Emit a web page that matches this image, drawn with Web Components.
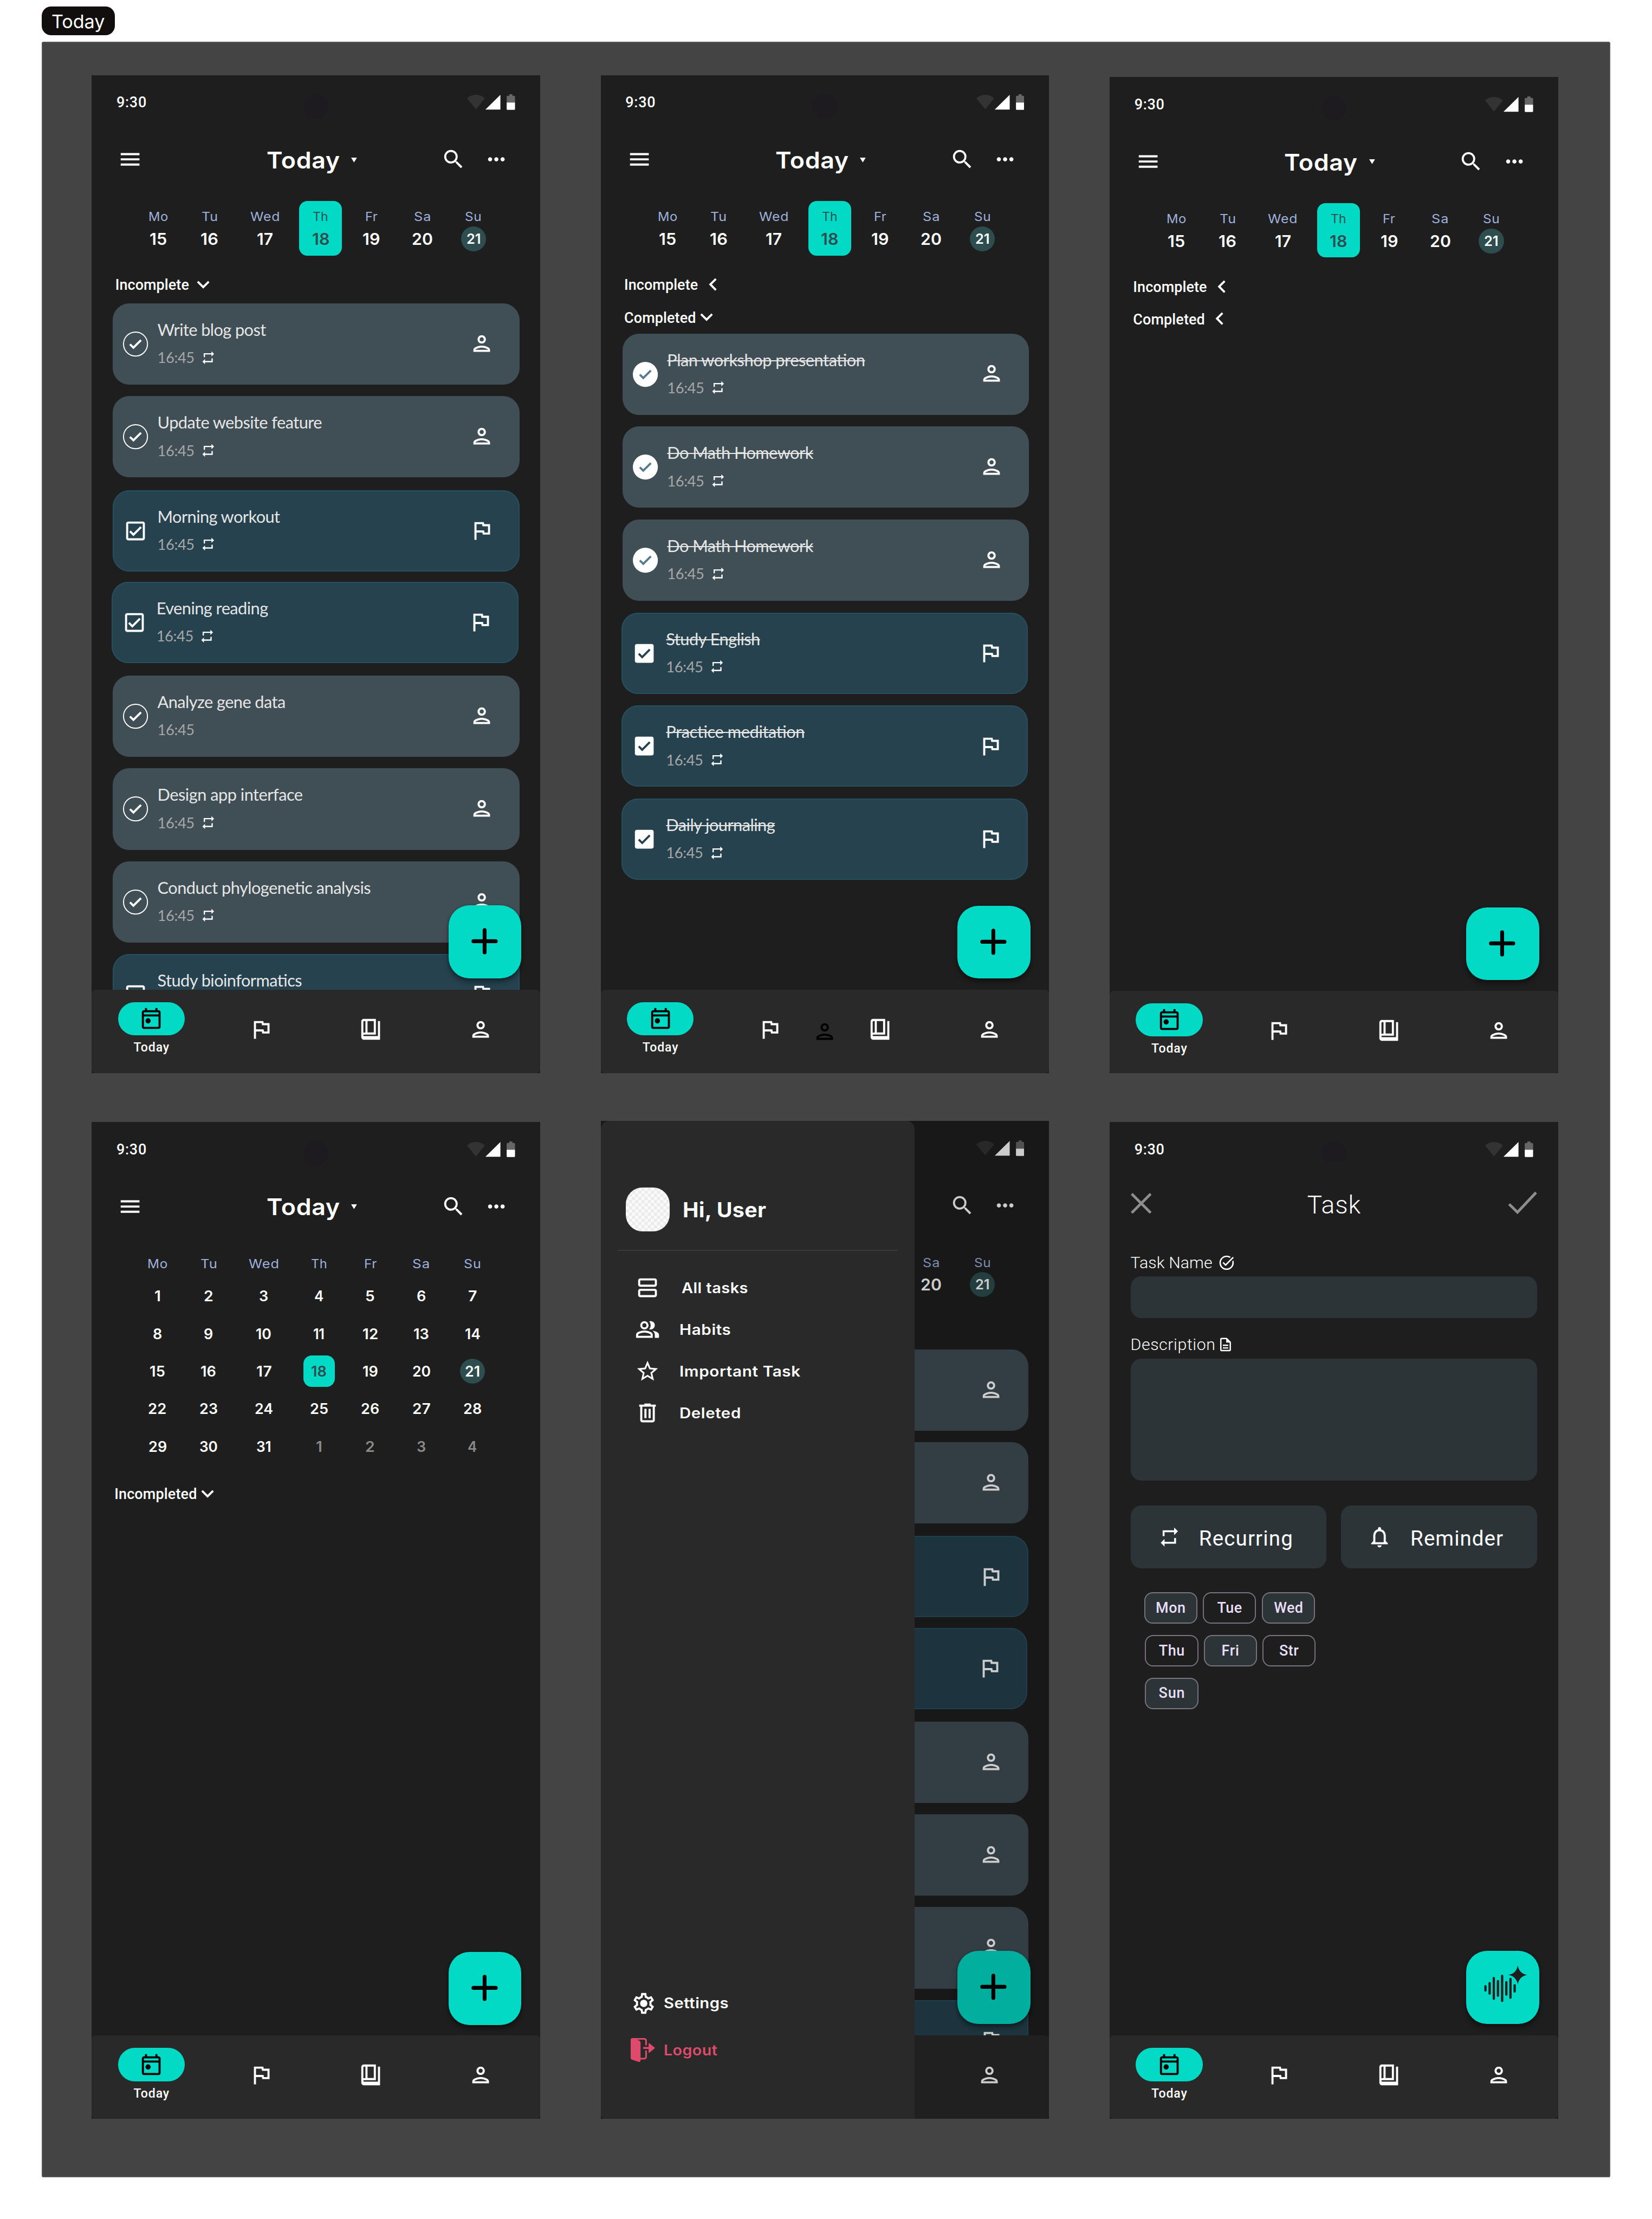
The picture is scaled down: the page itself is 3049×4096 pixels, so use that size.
<!DOCTYPE html>
<html lang="en">
<head>
<meta charset="utf-8">
<title>Today</title>
<style>
html,body{margin:0;padding:0;background:#fff}
body{overflow:hidden}
design-board{zoom:1.92487}
</style>
</head>
<body>
<design-board>
  <board-row>
    <phone-screen height="957">
      <status-bar></status-bar><app-header></app-header><week-strip></week-strip>
      <section-toggle label="Incomplete" w="69.2" gap="1.6" icon="down" style="margin-top:13.2px"></section-toggle>
      <task-list slot="list" set="open" style="margin-top:2.8px"></task-list>
      <fab-button slot="fab"></fab-button>
      <bottom-nav slot="nav"></bottom-nav>
    </phone-screen>
    <phone-screen height="957">
      <status-bar></status-bar><app-header></app-header><week-strip></week-strip>
      <section-toggle label="Incomplete" w="69.2" gap="2.5" icon="left" style="margin-top:13.2px"></section-toggle>
      <section-toggle label="Completed" w="67.4" gap="-1.9" icon="down" style="margin-top:1.4px"></section-toggle>
      <task-list slot="list" set="done" style="margin-top:.3px"></task-list>
      <fab-button slot="fab" style="--top:796.4px"></fab-button>
      <bottom-nav slot="nav" extra></bottom-nav>
    </phone-screen>
    <phone-screen height="955">
      <status-bar></status-bar><app-header></app-header><week-strip></week-strip>
      <section-toggle label="Incomplete" w="69.2" gap="2.5" icon="left" style="margin-top:13.2px"></section-toggle>
      <section-toggle label="Completed" w="67.4" gap="2" icon="left" style="margin-top:1px"></section-toggle>
      <fab-button slot="fab"></fab-button>
      <bottom-nav slot="nav" style="margin-bottom:-1px"></bottom-nav>
    </phone-screen>
  </board-row>
  <board-row>
    <phone-screen height="956">
      <status-bar></status-bar><app-header></app-header><month-grid></month-grid>
      <section-toggle label="Incompleted" w="77.2" gap="-1.9" icon="down" style="margin-top:12.9px;margin-left:-.8px"></section-toggle>
      <fab-button slot="fab"></fab-button>
      <bottom-nav slot="nav"></bottom-nav>
    </phone-screen>
    <phone-screen height="957">
      <status-bar covered></status-bar><app-header covered></app-header><week-strip covered></week-strip>
      <task-list slot="list" set="open" covered style="margin-top:46px"></task-list>
      <fab-button slot="fab"></fab-button>
      <bottom-nav slot="nav" covered></bottom-nav>
      <side-drawer slot="over"></side-drawer>
    </phone-screen>
    <phone-screen height="956">
      <status-bar clipped></status-bar>
      <task-form></task-form>
      <fab-button slot="fab" kind="voice" style="--top:795px"></fab-button>
      <bottom-nav slot="nav"></bottom-nav>
    </phone-screen>
  </board-row>
</design-board>

<script>
const ICONS = {
  menu:'<path d="M3 18h18v-2H3v2zm0-5h18v-2H3v2zm0-7v2h18V6H3z"/>',
  search:'<path d="M15.5 14h-.79l-.28-.27A6.471 6.471 0 0 0 16 9.5 6.5 6.5 0 1 0 9.5 16c1.61 0 3.09-.59 4.23-1.57l.27.28v.79l5 4.99L20.49 19l-4.99-5zm-6 0C7.01 14 5 11.99 5 9.5S7.01 5 9.5 5 14 7.01 14 9.5 11.99 14 9.5 14z"/>',
  more:'<path d="M6 10c-1.1 0-2 .9-2 2s.9 2 2 2 2-.9 2-2-.9-2-2-2zm12 0c-1.1 0-2 .9-2 2s.9 2 2 2 2-.9 2-2-.9-2-2-2zm-6 0c-1.1 0-2 .9-2 2s.9 2 2 2 2-.9 2-2-.9-2-2-2z"/>',
  down:'<path d="M16.59 8.59L12 13.17 7.41 8.59 6 10l6 6 6-6z"/>',
  left:'<path d="M15.41 7.41L14 6l-6 6 6 6 1.41-1.41L10.83 12z"/>',
  person:'<path d="M12 6c1.1 0 2 .9 2 2s-.9 2-2 2-2-.9-2-2 .9-2 2-2m0 10c2.7 0 5.8 1.29 6 2H6c.23-.72 3.31-2 6-2m0-12C9.79 4 8 5.79 8 8s1.79 4 4 4 4-1.79 4-4-1.79-4-4-4zm0 10c-2.67 0-8 1.34-8 4v2h16v-2c0-2.66-5.33-4-8-4z"/>',
  flag:'<path d="M12.36 6l.4 2H18v6h-3.36l-.4-2H7V6h5.36M14 4H5v17h2v-7h5.6l.4 2h7V6h-5.6L14 4z"/>',
  repeat:'<path d="M7 7h10v3l4-4-4-4v3H5v6h2V7zm10 10H7v-3l-4 4 4 4v-3h12v-6h-2v4z"/>',
  box:'<path d="M19 3H5c-1.1 0-2 .9-2 2v14c0 1.1.9 2 2 2h14c1.1 0 2-.9 2-2V5c0-1.1-.9-2-2-2zm0 16H5V5h14v14zM17.99 9l-1.41-1.42-6.59 6.59-2.58-2.57-1.42 1.41 4 3.99z"/>',
  boxFull:'<rect x="3" y="3" width="18" height="18" rx="2"/><path fill="#25424e" d="M17.99 9l-1.41-1.42-6.59 6.59-2.58-2.57-1.42 1.41 4 3.99z"/>',
  ring:'<circle cx="12" cy="12" r="11.5" fill="none" stroke="currentColor"/><path d="M17.99 8.9l-1.41-1.42-6.59 6.59-2.58-2.57-1.42 1.41 4 3.99z"/>',
  ringFull:'<circle cx="12" cy="12" r="12"/><path fill="#557c8e" d="M17.99 8.9l-1.41-1.42-6.59 6.59-2.58-2.57-1.42 1.41 4 3.99z"/>',
  today:'<path fill-rule="evenodd" d="M5 22c-1.1 0-2-.9-2-2V6c0-1.1.9-2 2-2h1V2h2v2h8V2h2v2h1c1.1 0 2 .9 2 2v14c0 1.1-.9 2-2 2H5zm0-2h14V10H5v10zM5 8h14V6H5v2z"/><circle cx="9" cy="14.2" r="2.5"/>',
  book:'<path fill-rule="evenodd" d="M5.5 2H17v15H5.8c-.5 0-.8.3-.8.75s.3.75.8.75H19V4h2v18H5.8C4.2 22 3 20.8 3 19.2V4.5C3 3.1 4.1 2 5.5 2zM5 4.6v10.6L7 15V4h-1.4zM9 4v11h6V4z"/>',
  views:'<path fill-rule="evenodd" d="M5 3h14c1.1 0 2 .9 2 2v4c0 1.1-.9 2-2 2H5c-1.1 0-2-.9-2-2V5c0-1.1.9-2 2-2zm0 2v4h14V5zm0 8h14c1.1 0 2 .9 2 2v4c0 1.1-.9 2-2 2H5c-1.1 0-2-.9-2-2v-4c0-1.1.9-2 2-2zm0 2v4h14v-4z"/>',
  group:'<path fill-rule="evenodd" d="M1 20v-2.8c0-.57.15-1.09.44-1.56.29-.48.68-.84 1.16-1.09 1.03-.52 2.08-.9 3.15-1.16C6.82 13.13 7.9 13 9 13s2.18.13 3.25.39c1.07.26 2.12.64 3.15 1.16.48.25.87.61 1.16 1.09.29.47.44.99.44 1.56V20H1zm2-2h12v-.8c0-.37-.18-.68-.5-.85-.9-.45-1.8-.79-2.73-1.01C10.85 15.11 9.93 15 9 15s-1.85.11-2.77.34C5.3 15.56 4.4 15.9 3.5 16.35c-.32.17-.5.48-.5.85V18z"/><path d="M19 20v-3c0-.73-.2-1.44-.61-2.11-.41-.68-.99-1.26-1.74-1.74.85.1 1.65.27 2.4.51.75.24 1.45.54 2.1.89.6.33 1.06.7 1.38 1.11.32.41.47.85.47 1.34v3h-4z"/><path fill-rule="evenodd" d="M9 12a4 4 0 1 1 0-8 4 4 0 0 1 0 8zm0-2a2 2 0 1 0 0-4 2 2 0 0 0 0 4z"/><path d="M19 8a4 4 0 0 1-4 4c-.18 0-.42-.02-.7-.06-.28-.04-.52-.09-.7-.14.45-.53.8-1.13 1.04-1.78A5.8 5.8 0 0 0 15 8c0-.7-.12-1.37-.36-2.03A5.9 5.9 0 0 0 13.6 4.2 4 4 0 0 1 19 8z"/>',
  star:'<path d="M22 9.24l-7.19-.62L12 2 9.19 8.63 2 9.24l5.46 4.73L5.82 21 12 17.27 18.18 21l-1.63-7.03L22 9.24zM12 15.4l-3.76 2.27 1-4.28-3.32-2.88 4.38-.38L12 6.1l1.71 4.04 4.38.38-3.32 2.88 1 4.28L12 15.4z"/>',
  trash:'<path fill-rule="evenodd" d="M7 21c-1.1 0-2-.9-2-2V6H4V4h5V3h6v1h5v2h-1v13c0 1.1-.9 2-2 2H7zM7 6v13h10V6H7zm2 2h2v9H9V8zm4 0h2v9h-2V8z"/>',
  gear:'<path d="M19.43 12.98c.04-.32.07-.64.07-.98s-.03-.66-.07-.98l2.11-1.65c.19-.15.24-.42.12-.64l-2-3.46c-.09-.16-.26-.25-.44-.25-.06 0-.12.01-.17.03l-2.49 1c-.52-.4-1.08-.73-1.69-.98l-.38-2.65A.488.488 0 0 0 14 2h-4c-.25 0-.46.18-.49.42l-.38 2.65c-.61.25-1.17.59-1.69.98l-2.49-1a.566.566 0 0 0-.18-.03c-.17 0-.34.09-.43.25l-2 3.46c-.13.22-.07.49.12.64l2.11 1.65c-.04.32-.07.65-.07.98s.03.66.07.98l-2.11 1.65c-.19.15-.24.42-.12.64l2 3.46c.09.16.26.25.44.25.06 0 .12-.01.17-.03l2.49-1c.52.4 1.08.73 1.69.98l.38 2.65c.03.24.24.42.49.42h4c.25 0 .46-.18.49-.42l.38-2.65c.61-.25 1.17-.59 1.69-.98l2.49 1c.06.02.12.03.18.03.17 0 .34-.09.43-.25l2-3.46c.12-.22.07-.49-.12-.64l-2.11-1.65zm-1.98-1.71c.04.31.05.52.05.73 0 .21-.02.43-.05.73l-.14 1.13.89.7 1.08.84-.7 1.21-1.27-.51-1.04-.42-.9.68c-.43.32-.84.56-1.25.73l-1.06.43-.16 1.13-.2 1.35h-1.4l-.19-1.35-.16-1.13-1.06-.43c-.43-.18-.83-.41-1.23-.71l-.91-.7-1.06.43-1.27.51-.7-1.21 1.08-.84.89-.7-.14-1.13c-.03-.31-.05-.54-.05-.74s.02-.43.05-.73l.14-1.13-.89-.7-1.08-.84.7-1.21 1.27.51 1.04.42.9-.68c.43-.32.84-.56 1.25-.73l1.06-.43.16-1.13.2-1.35h1.39l.19 1.35.16 1.13 1.06.43c.43.18.83.41 1.23.71l.91.7 1.06-.43 1.27-.51.7 1.21-1.07.85-.89.7.14 1.13z"/><circle cx="12" cy="12" r="3.5"/>',
  logout:'<path d="M.5 2.300C.5 1.200 1.300.5 2.300.5L8 2.600c1.300.5 2 1.200 2 2.500V22c0 1-.8 1.700-1.800 1.400L2 21.300c-1-.3-1.500-1-1.500-2z"/><path d="M2.300 1.300h11.200c1 0 1.800.8 1.800 1.800v3.700M15.300 13v5.500c0 1-.8 1.800-1.800 1.800H9.500" fill="none" stroke="currentColor" stroke-width="1.600" stroke-linecap="round"/><path d="M13.200 10h5" stroke="currentColor" stroke-width="1.800" stroke-linecap="round"/><path d="M18.200 6l5 4-5 4.200z" stroke="currentColor" stroke-width="1" stroke-linejoin="round"/>',
  bell:'<path d="M12 22c1.1 0 2-.9 2-2h-4c0 1.1.9 2 2 2zm6-6v-5c0-3.07-1.63-5.64-4.5-6.32V4c0-.83-.67-1.5-1.5-1.5s-1.5.67-1.5 1.5v.68C7.64 5.36 6 7.92 6 11v5l-2 2v1h16v-1l-2-2zm-2 1H8v-6c0-2.48 1.51-4.5 4-4.5s4 2.02 4 4.5v6z"/>',
  task:'<path d="M22 5.18L10.59 16.6l-4.24-4.24 1.41-1.41 2.83 2.83 10-10L22 5.18zm-2.21 5.04c.13.57.21 1.17.21 1.78 0 4.42-3.58 8-8 8s-8-3.58-8-8 3.58-8 8-8c1.58 0 3.04.46 4.28 1.25l1.44-1.44A9.9 9.9 0 0 0 12 2C6.48 2 2 6.48 2 12s4.48 10 10 10 10-4.48 10-10c0-1.19-.22-2.33-.6-3.39l-1.61 1.61z"/>',
  doc:'<path d="M8 16h8v2H8zm0-4h8v2H8zm6-10H6c-1.1 0-2 .9-2 2v16c0 1.1.89 2 1.99 2H18c1.1 0 2-.9 2-2V8l-6-6zm4 18H6V4h7v5h5v11z"/>',
};

function define(name, render) {
  customElements.define(name, class extends HTMLElement {
    connectedCallback() {
      if (this.shadowRoot) return;
      const t = document.createElement('template');
      t.innerHTML = render(this);
      this.attachShadow({mode: 'open'}).appendChild(t.content.cloneNode(true));
    }
  });
}

/* Text fitted so that its ink spans the width in "w": Inter is widened first, the rest is tracking. */
const pen = document.createElement('canvas').getContext('2d');
customElements.define('fit-text', class extends HTMLElement {
  connectedCallback() {
    if (this.shadowRoot) return;
    const a = n => this.getAttribute(n);
    const size = +a('size'), weight = a('weight') || 400, face = a('face') || 'Roboto';
    const text = this.textContent;
    let ls = 0, sx = 1, adv = 0;
    if (a('w')) {
      pen.font = `${weight} 200px "${face}"`;
      const m = pen.measureText(text), k = size / 200;
      const ink = (m.actualBoundingBoxRight + m.actualBoundingBoxLeft) * k;
      if (face == 'Inter') sx = 1 + (a('w') / ink - 1) * .75;
      ls = (a('w') / sx - ink) / Math.max(1, text.length - 1);
      adv = (m.width * k + ls * (text.length - 1)) * sx;
    }
    this.attachShadow({mode: 'open'}).innerHTML = `<style>
      :host{display:block;flex:none;white-space:pre;width:${adv.toFixed(2)}px;font:${weight} ${size}px/var(--lh,16px) "${face}",sans-serif}
      span{display:inline-block;letter-spacing:${ls.toFixed(3)}px;margin-right:${(-ls).toFixed(3)}px;
        transform-origin:0 50%;transform:${sx == 1 ? 'none' : `scaleX(${sx.toFixed(4)})`};
        font-kerning:normal;font-feature-settings:"liga" 1,"kern" 1;text-decoration:inherit}
    </style><span><slot></slot></span>`;
  }
});

define('m-icon', el => {
  const s = el.getAttribute('size') || 24;
  return `<style>:host{display:block;flex:none;width:${s}px;height:${s}px}svg{display:block;overflow:visible}</style>
  <svg width="${s}" height="${s}" viewBox="0 0 24 24" fill="currentColor">${ICONS[el.getAttribute('name')]}</svg>`;
});

define('design-board', () => `<style>
  :host{display:block;width:1584px;height:2128px;padding:6px 40px 40px;box-sizing:border-box;background:#fff;color:#fff;font-family:Roboto,sans-serif}
  .tag{display:flex;align-items:center;height:28px;width:70px;justify-content:center;border-radius:9px;background:#110e0d;--lh:28px}
  .tag fit-text{margin-top:1.500px}
  .frame{margin-top:6px;height:2048px;box-sizing:border-box;background:#444;box-shadow:inset 0 0 0 1px #565656;border-radius:2px;padding:32px 48px 0;display:flex;flex-direction:column;gap:46px}
</style><div class="tag"><fit-text face="Inter" size="18" w="50">Today</fit-text></div>
<div class="frame"><slot></slot></div>`);

define('board-row', () => `<style>:host{display:flex;align-items:flex-end;gap:58px}</style><slot></slot>`);

define('phone-screen', el => `<style>
  :host{display:flex;flex-direction:column;position:relative;overflow:hidden;flex:none;width:430px;height:${el.getAttribute('height')}px;background:#1e1e1e;color:#fff}
  .body{flex:1;min-height:0;overflow:hidden}
</style><div class="body"><slot></slot><slot name="list"></slot></div><slot name="nav"></slot><slot name="fab"></slot><slot name="over"></slot>`);

define('status-bar', el => `<style>
  :host{display:flex;height:52px;align-items:center;padding:0 24px 0 23.700px;justify-content:space-between}
  p{width:170.300px;margin:.9px 0 0}
  i{width:24px;height:24px;border-radius:50%;background:#1d1b20;margin-top:8px;flex:none;${el.hasAttribute('clipped') ? 'clip-path:inset(0 0 4px 0)' : ''}}
  div{width:170px;display:flex;justify-content:flex-end}
  svg{display:block}
</style><p>${el.hasAttribute('covered') ? '' : '<fit-text weight="500" size="14" w="27.400">9:30</fit-text>'}</p><i></i>
<div><svg width="46" height="16" viewBox="0 0 46 16">
 <path fill="#333" d="M8.500 15L0 4.400C2.200 2.200 5.200 1 8.500 1s6.300 1.200 8.500 3.400z"/>
 <path fill="#fff" d="M17.600 15.200H32V1z"/>
 <path fill="#666" d="M38 8.500V3c0-.5.400-1 1-1h1.500V.5h3V2H45c.6 0 1 .5 1 1v5.500z"/>
 <path fill="#fff" d="M38 8.500h8v6c0 .6-.4 1-1 1h-6c-.6 0-1-.4-1-1z"/>
</svg></div>`);

define('app-header', el => `<style>
  :host{display:flex;height:58px;align-items:center;padding-left:25px}
  p{margin:1.400px 0 0 118.400px;width:81.200px;--lh:30px}
  .caret{width:6px;height:5px;margin-top:1px;flex:none}
  .s{margin-left:80.100px}.m{margin-left:17.300px}
</style><m-icon name="menu"></m-icon><p>${el.hasAttribute('covered') ? '' : '<fit-text face="Inter" weight="600" size="21.900" w="68.900">Today</fit-text>'}</p>
<svg class="caret" viewBox="0 0 6 5"><path fill="#fff" d="M0 0h5.600L2.800 4.600z"/></svg>
<m-icon class="s" name="search"></m-icon><m-icon class="m" name="more"></m-icon>`);

const DAYS = [['Mo',17.2],['Tu',14],['Wed',27],['Th',13.5],['Fr',10.5],['Sa',14.6],['Su',14.3]];
const dayLabel = (d, w) => `<fit-text class="d" face="Inter" size="11.700" w="${w}">${d}</fit-text>`;

define('week-strip', el => {
  const nums = [[15,15.3],[16,15.6],[17,14.3],[18,15.4],[19,15.4],[20,18.5],[21,12.1]];
  const cut = el.hasAttribute('covered') ? 5 : 0;
  return `<style>
  :host{display:grid;grid-template-columns:49px 49px 57px 49px 49px 49px 49px;padding:11px 0 0 39.500px;justify-items:center}
  .c{width:41px;height:52px;border-radius:8px;display:flex;flex-direction:column;align-items:center;padding-top:7px;box-sizing:border-box}
  .d{color:#9fb2dd}
  .n{margin-top:1px;min-width:24px;height:24px;display:flex;justify-content:center;--lh:24px;border-radius:12px}
  .on{background:#03dac6;margin-left:1px}.on,.on .d{color:#2d4d4e}
  .ev .n{background:#2d4d4e}
</style>${DAYS.map(([d, w], i) => i < cut ? '<div class="c"></div>' : `<div class="c ${i == 3 ? 'on' : i == 6 ? 'ev' : ''}">${dayLabel(d, w)}<div class="n"><fit-text face="Inter" weight="600" size="${i == 6 ? 13.5 : 15.6}" w="${nums[i][1]}">${nums[i][0]}</fit-text></div></div>`).join('')}`;
});

define('month-grid', () => {
  let cells = '';
  const two = n => { n = String(n); return n.length == 1 ? (n == 1 ? 4.6 : 7.6) : n == 11 ? 9.4 : n[0] == '1' ? 13.7 : n[1] == '1' ? 12.8 : 16.2; };
  for (let i = 1; i <= 35; i++) {
    const n = i > 31 ? i - 31 : i;
    cells += `<div class="n ${i > 31 ? 'off' : i == 18 ? 'on' : i == 21 ? 'ev' : ''}"><b><fit-text face="Inter" weight="600" size="13.900" w="${two(n)}">${n}</fit-text></b></div>`;
  }
  return `<style>
  :host{display:grid;grid-template-columns:49px 49px 57px 49px 49px 49px 49px;padding:18.400px 0 0 38.500px;justify-items:center}
  .d{color:#9fb2dd;margin-bottom:4.600px}
  .n{height:36px;display:flex;align-items:center;--lh:24px}
  b{display:flex;justify-content:center;align-items:center;min-width:24px;height:24px;border-radius:12px}
  .on b{width:30px;height:30px;border-radius:8px;background:#03dac6;color:#2d4d4e}
  .ev b{background:#2d4d4e}.off{color:#8a8a8a}
</style>${DAYS.map(([d, w]) => dayLabel(d, w * 1.03)).join('')}${cells}`;
});

define('section-toggle', el => `<style>
  :host{display:flex;height:30px;align-items:center;padding-left:22.500px}
  fit-text{margin-top:.8px}
  m-icon{margin-left:${el.getAttribute('gap')}px;margin-top:-1px}
</style><fit-text weight="500" size="14" w="${el.getAttribute('w')}">${el.getAttribute('label')}</fit-text><m-icon name="${el.getAttribute('icon')}"></m-icon>`);

const TASKS = {
  open: [
    ['Write blog post',103.9,'me',0],['Update website feature',156.4,'me',11],['Morning workout',116.5,'habit',12],
    ['Evening reading',105.6,'habit shift',10],['Analyze gene data',122,'me once',12],['Design app interface',137.5,'me',11],
    ['Conduct phylogenetic analysis',203.2,'me',11],['Study bioinformatics',137.8,'habit',11]],
  done: [
    ['Plan workshop presentation',187.7,'me',0],['Do Math Homework',138.9,'me',11.2],['Do Math Homework',138.9,'me',11.2],
    ['Study English',89.3,'habit shift',11.2],['Practice meditation',130.3,'habit shift',11.2],['Daily journaling',103.3,'habit shift',11.2]],
};
define('task-list', el => {
  const set = el.getAttribute('set');
  return `<style>
  :host{display:flex;flex-direction:column;padding:0 20px;${set == 'done' ? 'margin-left:.7px;margin-right:-.7px' : ''}}
  .shift{margin-left:-1px;margin-right:1px}
</style>${TASKS[set].map(([t, w, k, g]) => `<task-card class="${k}" ${set == 'done' ? 'done' : ''} ${el.hasAttribute('covered') ? 'covered' : ''} kind="${k.split(' ')[0]}" ${k.includes('once') ? 'once' : ''} label="${t}" w="${w}" style="margin-top:${g}px"></task-card>`).join('')}`;
});

define('task-card', el => {
  const habit = el.getAttribute('kind') == 'habit', done = el.hasAttribute('done');
  const mark = habit ? (done ? 'boxFull' : 'box') : (done ? 'ringFull' : 'ring');
  return `<style>
  :host{display:flex;flex:none;height:78px;box-sizing:border-box;border-radius:16px;align-items:center;padding:0 24px 0 10px;
    background:${habit ? '#25424e' : '#404e55'};${habit ? 'box-shadow:inset 0 0 0 1px #264f5f' : ''}}
  .t{flex:1;padding:0 0 0 9px;margin-bottom:2.200px}
  .a{color:#e6e6e6;--lh:20px;${done ? 'text-decoration:line-through 1px' : ''}}
  .b{display:flex;align-items:center;color:#a7a7a7;margin-top:8.700px;--lh:16px}
  .r{color:#fff;margin-left:5.800px;margin-top:-.5px}
</style><m-icon name="${mark}"></m-icon>
<div class="t">${el.hasAttribute('covered') ? '' : `<fit-text class="a" face="Lato" size="16" w="${el.getAttribute('w')}">${el.getAttribute('label')}</fit-text>
<div class="b"><fit-text face="Lato" size="14.200" w="33.600">16:45</fit-text>${el.hasAttribute('once') ? '' : '<m-icon class="r" name="repeat" size="14.900"></m-icon>'}</div>`}</div>
<m-icon name="${habit ? 'flag' : 'person'}" style="margin-top:${habit ? -.6 : -1.200}px"></m-icon>`;
});

define('fab-button', el => `<style>
  :host{position:absolute;left:342px;top:var(--top,796px);width:70px;height:70px;border-radius:20px;background:#03dac6;
    box-shadow:0 4px 5px rgba(0,0,0,.28),0 1px 3px rgba(0,0,0,.3)}
  svg{display:block}
</style>${el.getAttribute('kind') == 'voice'
  ? `<svg width="70" height="70" viewBox="0 0 70 70"><g stroke="#1e1e1e" stroke-width="2.200" stroke-linecap="round"><path d="M18.500 34v4M22.500 31v10M26.500 26v20M30.500 29v14M34.500 24v24M38.500 30v12M42.500 27v18M46.500 33v6"/></g><path d="M49.500 14q1.500 8 9 9-7.500 1.500-9 9-1.500-7.500-9-9 7.500-1 9-9z" fill="#1e1e1e"/></svg>`
  : `<svg width="70" height="70" viewBox="0 0 70 70"><path d="M34.500 23.800v21.400M23.800 34.500h21.400" stroke="#000" stroke-width="3.700" stroke-linecap="round"/></svg>`}`);

define('bottom-nav', el => `<style>
  :host{display:flex;position:relative;flex:none;height:80px;background:#292929;border-radius:4px;padding:0 4.500px;box-sizing:border-box}
  .i{flex:1;display:flex;flex-direction:column;align-items:center;padding-top:26px}
  .act{padding-top:12px}
  .pill{width:64px;height:32px;border-radius:16px;background:#03dac6;color:#000;display:flex;justify-content:center;align-items:center;margin-bottom:4px}
  .x{position:absolute;left:203px;top:28px;color:#000}
</style><div class="i act"><div class="pill"><m-icon name="today"></m-icon></div>${el.hasAttribute('covered') ? '' : '<fit-text weight="500" size="12" w="33.900">Today</fit-text>'}</div>
<div class="i"><m-icon name="flag"></m-icon></div><div class="i"><m-icon name="book"></m-icon></div><div class="i"><m-icon name="person"></m-icon></div>
${el.hasAttribute('extra') ? '<m-icon class="x" name="person"></m-icon>' : ''}`);

define('side-drawer', () => {
  const item = (ic, t, w, g) => `<div class="it"><m-icon name="${ic}"></m-icon><fit-text face="Inter" weight="600" size="13.700" w="${w}" style="margin-left:${g}px">${t}</fit-text></div>`;
  return `<style>
  :host{position:absolute;inset:0;background:rgba(0,0,0,.2)}
  .p{width:301px;height:100%;box-sizing:border-box;background:#292929;border-radius:8px 8px 0 4px;padding:64px 16px 0;display:flex;flex-direction:column}
  .u{display:flex;align-items:center;height:42px;padding-left:8px;--lh:28px}
  .av{width:42px;height:42px;border-radius:16px;background:#fafafa repeating-conic-gradient(#ebebeb 0 25%,#fafafa 0 50%) 0 0/6px 6px}
  hr{border:0;height:1px;background:#3a3940;margin:17.500px 0 15.500px;width:269px;flex:none}
  .it{display:flex;align-items:center;height:40px;padding-left:17px;--lh:20px}
  .f{margin-top:auto;padding-bottom:43.500px}
  .f .it{height:45px;padding-left:13px}
  .out{color:#de4a6c}
  .out .it{padding-left:12px}
</style><div class="p"><div class="u"><div class="av"></div><fit-text face="Inter" weight="700" size="19.600" w="79" style="margin:1px 0 0 12.500px">Hi, User</fit-text></div><hr>
${item('views','All tasks',62.8,20.8)}${item('group','Habits',47.6,18.3)}${item('star','Important Task',114.8,18.3)}${item('trash','Deleted',56.8,18.3)}
<div class="f">${item('gear','Settings',60.9,7.6)}<div class="out">${item('logout','Logout',50,8.3)}</div></div></div>`;
});

define('task-form', () => {
  const chip = (t, w, on) => `<div class="chip ${on ? 'on' : ''}"><fit-text weight="500" size="14" w="${w}">${t}</fit-text></div>`;
  return `<style>
  :host{display:block;padding:0 20px}
  .h{display:flex;height:58px;align-items:center;justify-content:space-between}
  .h fit-text{--lh:30px;margin:-2.500px 0 0 8px}
  .l{display:flex;align-items:center;height:26px;padding-top:12px}
  .l m-icon{margin-left:5.500px}
  .f{background:#2d3438;border-radius:10px;height:40px}
  .b{display:flex;gap:14px;margin-top:24px}
  .b div{width:188px;height:60px;border-radius:10px;background:#2d3438;display:flex;align-items:center;--lh:28px;box-sizing:border-box}
  .b fit-text{margin-top:3px}
  .r{display:flex;gap:5.200px;margin:11px 0 0 14px}
  .chip{width:51px;height:30px;box-shadow:inset 0 0 0 1px #79747e;border-radius:8px;box-sizing:border-box;display:flex;align-items:center;justify-content:center;color:#e8def8}
  .on{background:#2d3438}
</style>
<div class="h"><svg width="20" height="20" viewBox="0 0 20 20" style="margin-top:-6px"><path d="M.9.900l18.200 18.200M19.100.900L.9 19.100" stroke="#8e8e8e" stroke-width="2.500"/></svg>
<fit-text weight="300" size="24" w="50.700">Task</fit-text>
<svg width="28" height="22" viewBox="0 0 28 22" style="margin-top:-7px"><path d="M1.200 12.300l8 7.800L27 1.200" fill="none" stroke="#8e8e8e" stroke-width="2.600"/></svg></div>
<div class="l"><fit-text weight="300" size="15.700" w="77.500">Task Name</fit-text><m-icon name="task" size="16.500"></m-icon></div>
<div class="f"></div>
<div class="l" style="height:27px"><fit-text weight="300" size="15.700" w="78.700">Description</fit-text><m-icon name="doc" size="15.500" style="margin-left:2.200px"></m-icon></div>
<div class="f" style="height:117px"></div>
<div class="b"><div><m-icon name="repeat" size="22" style="margin-left:26px"></m-icon><fit-text size="20" w="87" style="margin-left:17.600px">Recurring</fit-text></div>
<div><m-icon name="bell" size="24" style="margin-left:25px"></m-icon><fit-text size="20" w="87" style="margin-left:17.400px">Reminder</fit-text></div></div>
<div class="r" style="margin:23px 0 0 13px;gap:5.500px">${chip('Mon',26.8,1)}${chip('Tue',23,0)}${chip('Wed',26.8,1)}</div>
<div class="r">${chip('Thu',23.6,0)}${chip('Fri',15,1)}${chip('Str',18,0)}</div>
<div class="r">${chip('Sun',23.6,1)}</div>`;
});
</script>
</body>
</html>
